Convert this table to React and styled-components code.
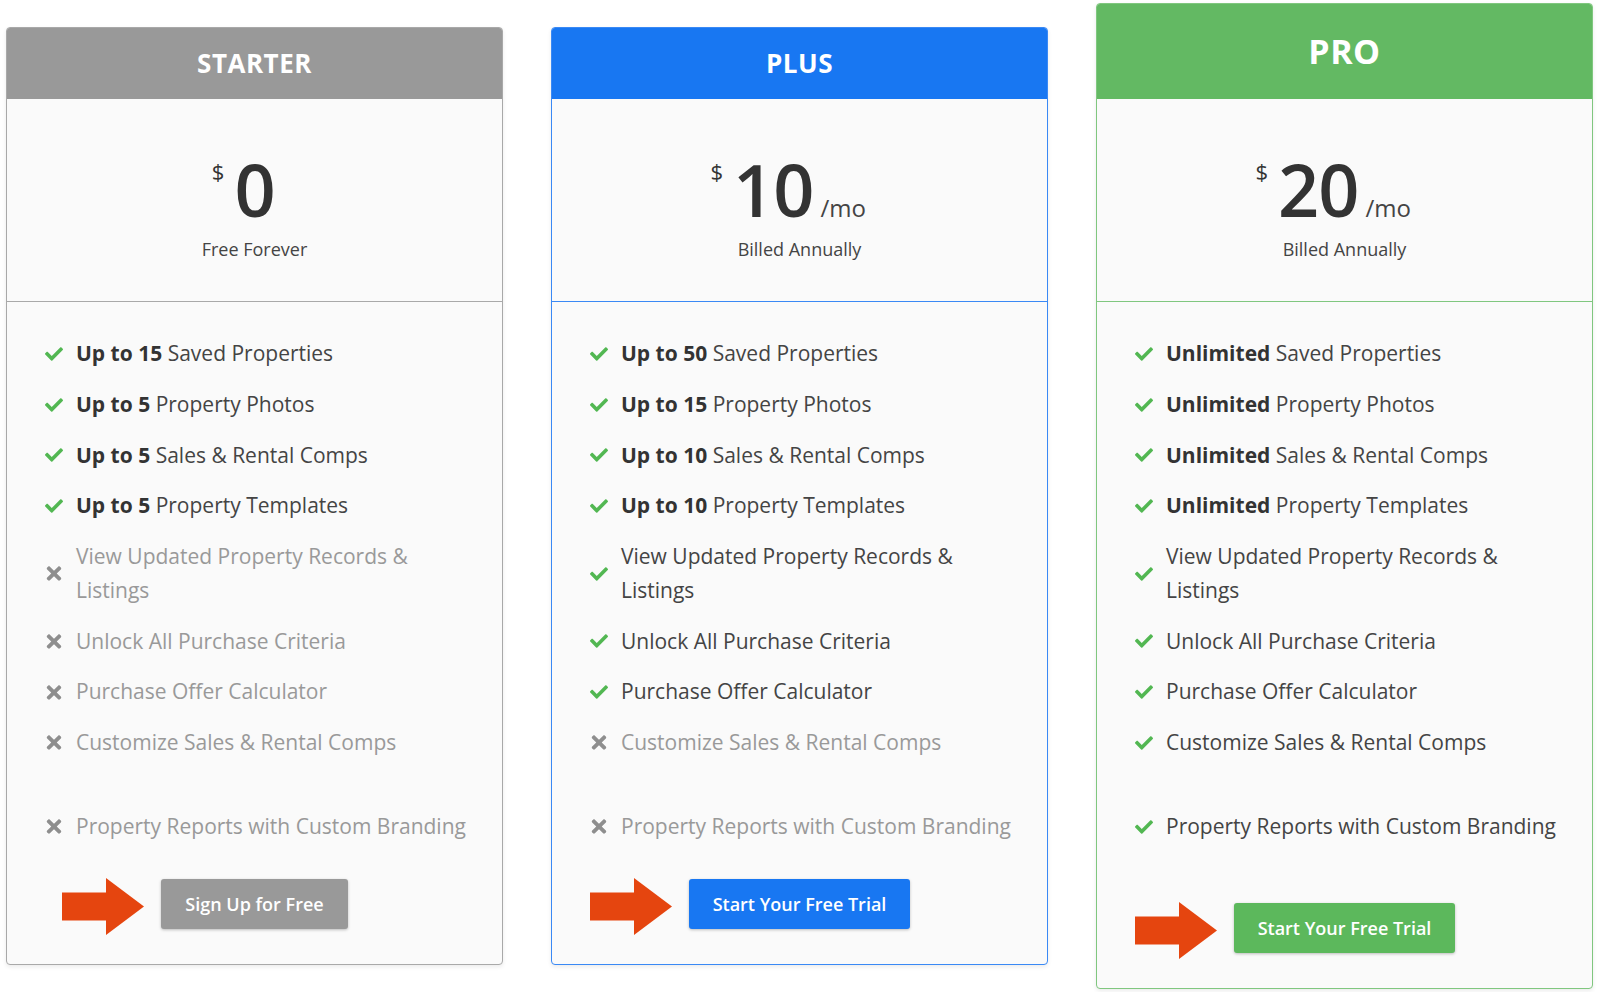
import React from 'react';
import styled, { createGlobalStyle } from 'styled-components';
import { FaCheck, FaTimes } from 'react-icons/fa';

const GlobalStyle = createGlobalStyle`
  body {
    margin: 0;
    background: #ffffff;
    font-family: "Open Sans", "Liberation Sans", sans-serif;
  }
`;

const tones = {
    starter: { header: '#999999', border: '#a9a9a9', button: '#999999' },
    plus: { header: '#1877f2', border: '#3a89f5', button: '#1877f2' },
    pro: { header: '#63b963', border: '#80c77f', button: '#5cb85c' },
};

const Page = styled.div`
    display: flex;
    align-items: flex-start;
    gap: 48px;
    padding: 3px 6px;
`;

const Card = styled.div`
    width: 497px;
    box-sizing: border-box;
    margin-top: ${props => props.$featured ? 0 : 24}px;
    background: #fafafa;
    border: 1px solid ${props => props.$tone.border};
    border-radius: 4px;
    overflow: hidden;
    box-shadow: 0 2px 4px rgba(0, 0, 0, 0.08);
`;

const Header = styled.div`
    height: ${props => props.$featured ? 96 : 72}px;
    margin: -1px -1px 0;
    background: ${props => props.$tone.header};
    color: #ffffff;
    display: flex;
    align-items: center;
    justify-content: center;
    font-size: ${props => props.$featured ? 34 : 26}px;
    font-weight: 700;
    letter-spacing: 0.5px;
`;

const PriceBlock = styled.div`
    height: 203px;
    box-sizing: border-box;
    padding-top: 54px;
    border-bottom: 1px solid ${props => props.$tone.border};
    display: flex;
    flex-direction: column;
    align-items: center;
`;

const PriceRow = styled.div`
    display: flex;
    align-items: baseline;
    color: #333333;
`;

const Amount = styled.span`
    position: relative;
    font-size: 72px;
    line-height: 72px;
    font-weight: 600;
    letter-spacing: -1px;
`;

const Currency = styled.span`
    position: absolute;
    right: 100%;
    margin-right: 10px;
    top: 7px;
    font-size: 22px;
    line-height: 22px;
    font-weight: 400;
    letter-spacing: 0;
`;

const Period = styled.span`
    font-size: 24px;
    margin-left: 7px;
    color: #444444;
`;

const Billing = styled.div`
    margin-top: 12px;
    font-size: 18px;
    line-height: 24px;
    color: #444444;
`;

const FeatureList = styled.ul`
    list-style: none;
    margin: 0;
    padding: 35px 28px 0 37px;
    display: flex;
    flex-direction: column;
    gap: 17px;
`;

const Feature = styled.li`
    display: flex;
    align-items: center;
    gap: 12px;
    margin-top: ${props => props.$spaced ? 33 : 0}px;
    font-size: 21px;
    line-height: 33.75px;
    color: ${props => props.$on ? '#444444' : '#999999'};
`;

const IconBox = styled.span`
    width: 20px;
    flex-shrink: 0;
    display: flex;
    justify-content: center;
    color: ${props => props.$on ? '#52b752' : '#8e8e8e'};
`;

const Strong = styled.b`
    font-weight: 700;
    color: #333333;
`;

const Footer = styled.div`
    display: flex;
    justify-content: center;
    padding: ${props => props.$featured ? 59 : 35}px 0 35px;
`;

const ButtonWrap = styled.div`
    position: relative;
`;

const Arrow = styled.svg`
    position: absolute;
    right: calc(100% + 17px);
    top: -1px;
`;

const CtaButton = styled.button`
    height: 50px;
    padding: 0 24px;
    border: none;
    border-radius: 3px;
    background: ${props => props.$tone.button};
    color: #ffffff;
    font-family: inherit;
    font-size: 18px;
    font-weight: 600;
    box-shadow: 0 1px 3px rgba(0, 0, 0, 0.25);
    cursor: pointer;
`;

const plans = [
    {
        key: 'starter',
        name: 'STARTER',
        price: '0',
        billing: 'Free Forever',
        cta: 'Sign Up for Free',
        features: [
            { bold: 'Up to 15', text: ' Saved Properties', on: true },
            { bold: 'Up to 5', text: ' Property Photos', on: true },
            { bold: 'Up to 5', text: ' Sales & Rental Comps', on: true },
            { bold: 'Up to 5', text: ' Property Templates', on: true },
            { text: 'View Updated Property Records & Listings', on: false },
            { text: 'Unlock All Purchase Criteria', on: false },
            { text: 'Purchase Offer Calculator', on: false },
            { text: 'Customize Sales & Rental Comps', on: false },
            { text: 'Property Reports with Custom Branding', on: false, spaced: true },
        ],
    },
    {
        key: 'plus',
        name: 'PLUS',
        price: '10',
        period: '/mo',
        billing: 'Billed Annually',
        cta: 'Start Your Free Trial',
        features: [
            { bold: 'Up to 50', text: ' Saved Properties', on: true },
            { bold: 'Up to 15', text: ' Property Photos', on: true },
            { bold: 'Up to 10', text: ' Sales & Rental Comps', on: true },
            { bold: 'Up to 10', text: ' Property Templates', on: true },
            { text: 'View Updated Property Records & Listings', on: true },
            { text: 'Unlock All Purchase Criteria', on: true },
            { text: 'Purchase Offer Calculator', on: true },
            { text: 'Customize Sales & Rental Comps', on: false },
            { text: 'Property Reports with Custom Branding', on: false, spaced: true },
        ],
    },
    {
        key: 'pro',
        name: 'PRO',
        price: '20',
        period: '/mo',
        billing: 'Billed Annually',
        cta: 'Start Your Free Trial',
        featured: true,
        features: [
            { bold: 'Unlimited', text: ' Saved Properties', on: true },
            { bold: 'Unlimited', text: ' Property Photos', on: true },
            { bold: 'Unlimited', text: ' Sales & Rental Comps', on: true },
            { bold: 'Unlimited', text: ' Property Templates', on: true },
            { text: 'View Updated Property Records & Listings', on: true },
            { text: 'Unlock All Purchase Criteria', on: true },
            { text: 'Purchase Offer Calculator', on: true },
            { text: 'Customize Sales & Rental Comps', on: true },
            { text: 'Property Reports with Custom Branding', on: true, spaced: true },
        ],
    },
];

const PointerArrow = () => (
    <Arrow width="82" height="57" viewBox="0 0 82 57">
        <path d="M0 14.5 H44 V0 L82 28.5 L44 57 V42.5 H0 Z" fill="#e5450f"/>
    </Arrow>
);

const PlanCard = ({plan}) => {
    const tone = tones[plan.key];
    return (
        <Card $tone={tone} $featured={plan.featured}>
            <Header $tone={tone} $featured={plan.featured}>{plan.name}</Header>
            <PriceBlock $tone={tone}>
                <PriceRow>
                    <Amount>
                        <Currency>$</Currency>
                        {plan.price}
                    </Amount>
                    {plan.period && <Period>{plan.period}</Period>}
                </PriceRow>
                <Billing>{plan.billing}</Billing>
            </PriceBlock>
            <FeatureList>
                {plan.features.map((f, i) => (
                    <Feature key={i} $on={f.on} $spaced={f.spaced}>
                        <IconBox $on={f.on}>
                            {f.on ? <FaCheck size={18}/> : <FaTimes size={21}/>}
                        </IconBox>
                        <span>
                            {f.bold && <Strong>{f.bold}</Strong>}
                            {f.text}
                        </span>
                    </Feature>
                ))}
            </FeatureList>
            <Footer $featured={plan.featured}>
                <ButtonWrap>
                    <PointerArrow/>
                    <CtaButton $tone={tone}>{plan.cta}</CtaButton>
                </ButtonWrap>
            </Footer>
        </Card>
    );
};

const App = () => (
    <>
        <GlobalStyle/>
        <Page>
            {plans.map(plan => <PlanCard key={plan.key} plan={plan}/>)}
        </Page>
    </>
);

export default App;
